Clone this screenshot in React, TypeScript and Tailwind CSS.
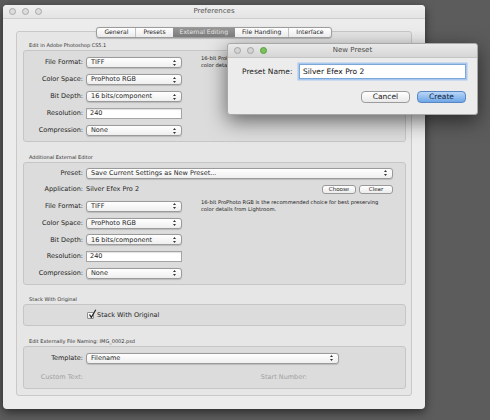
import React from "react";

const font = "font-['DejaVu_Sans','Liberation_Sans',sans-serif]";

function Arrows() {
  return (
    <svg width="3" height="6" viewBox="0 0 3 6" className="shrink-0">
      <path d="M1.5 0 L3 2 L0 2 Z" fill="#333" />
      <path d="M0 4 L3 4 L1.5 6 Z" fill="#333" />
    </svg>
  );
}

function Select({ value, w }: { value: string; w: string }) {
  return (
    <div
      className={`${w} h-[11px] flex items-center justify-between rounded-[3px] border border-[#9a9a9a] bg-linear-to-b from-white to-[#efefef] pl-[4px] pr-[5px] text-[6.5px] text-[#1e1e1e] shadow-[0_0.5px_1px_rgba(0,0,0,0.15)]`}
    >
      <span className="leading-none">{value}</span>
      <Arrows />
    </div>
  );
}

function Label({ children, gray }: { children: React.ReactNode; gray?: boolean }) {
  return (
    <div
      className={`w-[59px] shrink-0 text-right text-[6.5px] leading-none ${gray ? "text-[#a0a0a0]" : "text-[#1e1e1e]"}`}
    >
      {children}
    </div>
  );
}

function Row({ label, children }: { label: string; children: React.ReactNode }) {
  return (
    <div className="flex items-center h-[11px] gap-[3px]">
      <Label>{label}</Label>
      {children}
    </div>
  );
}

function TextInput({ value }: { value: string }) {
  return (
    <div className="w-[96px] h-[11px] flex items-center border border-[#a4a4a4] bg-white pl-[3px] text-[6.5px] leading-none text-[#1e1e1e] shadow-[inset_0_1px_1px_rgba(0,0,0,0.12)]">
      {value}
    </div>
  );
}

function Note() {
  return (
    <div className="ml-[19px] text-[5.2px] leading-[7px] text-[#222] whitespace-nowrap -mt-[2px]">
      16-bit ProPhoto RGB is the recommended choice for best preserving
      <br />
      color details from Lightroom.
    </div>
  );
}

function Section({ title, children, className }: { title: string; children: React.ReactNode; className: string }) {
  return (
    <div className="flex flex-col">
      <div className="pl-[6px] mb-[1px] text-[5px] leading-[7px] text-[#333]">{title}</div>
      <div className={`border border-[#c6c6c6] rounded-[3px] bg-[#dcdcdc] ${className}`}>{children}</div>
    </div>
  );
}

function Light({ color }: { color: string }) {
  return <span className={`w-[7px] h-[7px] rounded-full border ${color}`} />;
}

function SmallButton({ children }: { children: React.ReactNode }) {
  return (
    <div className="w-[34px] h-[9px] flex items-center justify-center rounded-[3px] border border-[#9a9a9a] bg-linear-to-b from-white to-[#ececec] text-[5.5px] leading-none text-[#222]">
      {children}
    </div>
  );
}

const tabs = ["General", "Presets", "External Editing", "File Handling", "Interface"];

export default function App() {
  return (
    <div className={`relative w-[490px] h-[420px] overflow-hidden bg-[#5c5c5c] ${font}`}>
      {/* Preferences window */}
      <div className="ml-[3px] mt-[5px] w-[422px] bg-[#ececec] rounded-[4px] shadow-[0_3px_10px_rgba(0,0,0,0.55)]">
        <div className="grid grid-cols-[1fr_auto_1fr] items-center h-[14px] border-b border-[#cfcfcf] rounded-t-[4px] bg-linear-to-b from-[#efefef] to-[#e4e4e4]">
          <div className="flex gap-[6px] pl-[6px]">
            <Light color="bg-[#dcdcdc] border-[#a9a9a9]" />
            <Light color="bg-[#dcdcdc] border-[#a9a9a9]" />
            <Light color="bg-[#dcdcdc] border-[#a9a9a9]" />
          </div>
          <div className="text-[7px] leading-none text-[#555]">Preferences</div>
          <div />
        </div>

        <div className="px-[13px] pt-[8px] pb-[13px] flex flex-col">
          <div className="relative z-10 flex justify-center -mb-[7px]">
            <div className="flex h-[11px] rounded-[3px] border border-[#9c9c9c] bg-linear-to-b from-white to-[#ebebeb] overflow-hidden shadow-[0_0.5px_1px_rgba(0,0,0,0.2)]">
              {tabs.map((t, i) => {
                const active = t === "External Editing";
                return (
                  <div
                    key={t}
                    className={`flex items-center px-[7px] text-[6.1px] leading-none ${
                      active
                        ? "bg-linear-to-b from-[#959595] to-[#7c7c7c] text-[#e4e4e4]"
                        : "text-[#222]"
                    } ${i > 0 && !active && tabs[i - 1] !== "External Editing" ? "border-l border-[#c2c2c2]" : ""}`}
                  >
                    {t}
                  </div>
                );
              })}
            </div>
          </div>

          <div className="border border-[#c9c9c9] rounded-[3px] bg-[#e6e6e6] pt-[10px] pb-[6px] pl-[6px] pr-[5px] flex flex-col gap-[11.5px]">
            <Section title="Edit in Adobe Photoshop CS5.1" className="pt-[6px] pb-[5px]">
              <div className="flex items-start">
                <div className="flex flex-col gap-[6px]">
                  <Row label="File Format:">
                    <Select value="TIFF" w="w-[96px]" />
                  </Row>
                  <Row label="Color Space:">
                    <Select value="ProPhoto RGB" w="w-[96px]" />
                  </Row>
                  <Row label="Bit Depth:">
                    <Select value="16 bits/component" w="w-[96px]" />
                  </Row>
                  <Row label="Resolution:">
                    <TextInput value="240" />
                  </Row>
                  <Row label="Compression:">
                    <Select value="None" w="w-[96px]" />
                  </Row>
                </div>
                <Note />
              </div>
            </Section>

            <Section title="Additional External Editor" className="pt-[5px] pb-[5px]">
              <div className="flex flex-col gap-[5.7px]">
                <div className="w-[369px] flex flex-col gap-[5.7px]">
                  <Row label="Preset:">
                    <Select value="Save Current Settings as New Preset..." w="w-[307px]" />
                  </Row>
                  <div className="flex items-center h-[11px] gap-[3px]">
                    <Label>Application:</Label>
                    <div className="text-[6.5px] leading-none text-[#1e1e1e]">Silver Efex Pro 2</div>
                    <div className="ml-auto flex gap-[3px]">
                      <SmallButton>Choose</SmallButton>
                      <SmallButton>Clear</SmallButton>
                    </div>
                  </div>
                </div>
                <div className="flex items-start">
                  <div className="flex flex-col gap-[5.7px]">
                    <Row label="File Format:">
                      <Select value="TIFF" w="w-[96px]" />
                    </Row>
                    <Row label="Color Space:">
                      <Select value="ProPhoto RGB" w="w-[96px]" />
                    </Row>
                    <Row label="Bit Depth:">
                      <Select value="16 bits/component" w="w-[96px]" />
                    </Row>
                    <Row label="Resolution:">
                      <TextInput value="240" />
                    </Row>
                    <Row label="Compression:">
                      <Select value="None" w="w-[96px]" />
                    </Row>
                  </div>
                  <Note />
                </div>
              </div>
            </Section>

            <Section title="Stack With Original" className="h-[22px] flex items-center pl-[63px]">
              <div className="flex items-center gap-[3px]">
                <span className="relative w-[7px] h-[7px] border border-[#8e8e8e] rounded-[1px] bg-linear-to-b from-white to-[#e6e6e6]">
                  <svg width="9" height="10" viewBox="0 0 9 10" className="absolute -left-[0.5px] -top-[3.5px]">
                    <path d="M1.5 5.5 L3.3 8.3 L7.8 0.8" fill="none" stroke="#222" strokeWidth="1.2" />
                  </svg>
                </span>
                <span className="text-[6.5px] leading-none text-[#1e1e1e]">Stack With Original</span>
              </div>
            </Section>

            <Section title="Edit Externally File Naming:  IMG_0002.psd" className="pt-[6px] pb-[5px] flex flex-col gap-[8px]">
              <Row label="Template:">
                <Select value="Filename" w="w-[253px]" />
              </Row>
              <div className="flex items-center h-[11px] gap-[3px]">
                <Label gray>Custom Text:</Label>
                <div className="w-[160px]" />
                <div className="w-[58px] text-right text-[6.5px] leading-none text-[#a0a0a0]">Start Number:</div>
              </div>
            </Section>
          </div>
        </div>
      </div>

      {/* New Preset dialog */}
      <div className="absolute left-[227px] top-[43px] w-[251px] h-[72px] bg-[#ececec] border border-[#a8a8a8] rounded-[3px] shadow-[0_6px_20px_rgba(0,0,0,0.55)] flex flex-col">
        <div className="grid grid-cols-[1fr_auto_1fr] items-center h-[14px] border-b border-[#c4c4c4] rounded-t-[3px] bg-linear-to-b from-[#e9e9e9] to-[#d6d6d6]">
          <div className="flex gap-[6px] pl-[6px]">
            <Light color="bg-[#d4d4d4] border-[#a4a4a4]" />
            <Light color="bg-[#d4d4d4] border-[#a4a4a4]" />
            <Light color="bg-[#7cc25c] border-[#5d9b43]" />
          </div>
          <div className="text-[7px] leading-none text-[#4a4a4a]">New Preset</div>
          <div />
        </div>
        <div className="flex items-center pl-[14px] pr-[11px] pt-[6px] gap-[4px]">
          <div className="text-[7.5px] leading-none text-[#1e1e1e] whitespace-nowrap">Preset Name:</div>
          <div className="ml-auto w-[167px] h-[15px] flex items-center border border-[#7da6d9] bg-white pl-[3px] text-[7.5px] leading-none text-[#111] shadow-[0_0_0_1.5px_#a9c8ee]">
            Silver Efex Pro 2
          </div>
        </div>
        <div className="flex justify-end gap-[7px] pr-[11px] pt-[12px]">
          <div className="w-[49px] h-[12px] flex items-center justify-center rounded-[4px] border border-[#9c9c9c] bg-linear-to-b from-white to-[#e9e9e9] text-[7.5px] leading-none text-[#222]">
            Cancel
          </div>
          <div className="w-[49px] h-[12px] flex items-center justify-center rounded-[4px] border border-[#5a86c4] bg-linear-to-b from-[#b8d6f7] to-[#6ea6e6] text-[7.5px] leading-none text-[#10243f]">
            Create
          </div>
        </div>
      </div>
    </div>
  );
}
